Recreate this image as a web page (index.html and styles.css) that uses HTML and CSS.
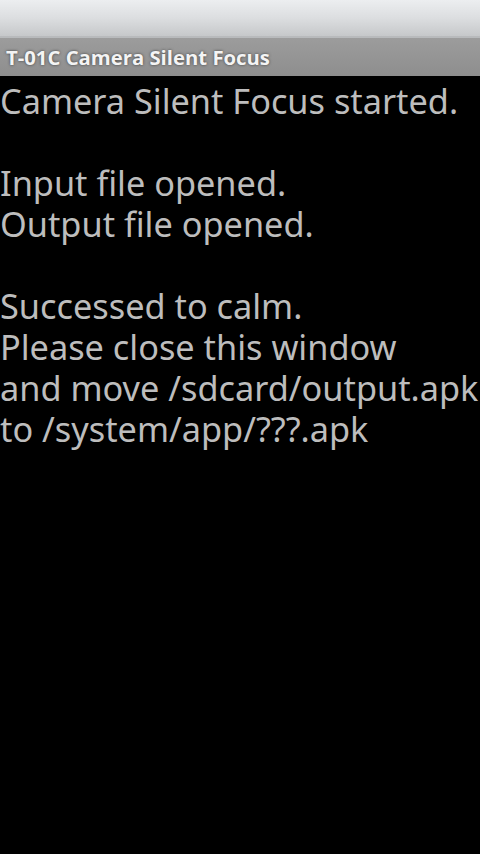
FILE: index.html
```html
<!DOCTYPE html>
<html>
<head>
<meta charset="utf-8">
<link rel="stylesheet" href="styles.css">
</head>
<body>
<div class="status-bar"></div>
<div class="title-bar"><span class="title">T-01C Camera Silent Focus</span></div>
<div class="log">
<div class="line">Camera Silent Focus started.</div>
<div class="line">&nbsp;</div>
<div class="line">Input file opened.</div>
<div class="line">Output file opened.</div>
<div class="line">&nbsp;</div>
<div class="line">Successed to calm.</div>
<div class="line">Please close this window</div>
<div class="line">and move /sdcard/output.apk</div>
<div class="line">to /system/app/???.apk</div>
</div>
</body>
</html>
```
FILE: styles.css
```css
html, body {
  margin: 0;
  padding: 0;
  background: #000;
  width: 480px;
  height: 854px;
  overflow: hidden;
}
.status-bar {
  height: 38px;
  box-sizing: border-box;
  background: linear-gradient(to bottom, #eceef0 0%, #dcdee0 50%, #c6c8ca 100%);
  border-bottom: 2px solid #b8babc;
}
.title-bar {
  height: 38px;
  box-sizing: border-box;
  background: linear-gradient(to bottom, #9c9c9c 0%, #8e8e8e 100%);
  display: flex;
  align-items: center;
  padding-left: 6px;
}
.title {
  font-family: "Open Sans", "Noto Sans", sans-serif;
  font-weight: 700;
  font-size: 20.3px;
  color: #f4f4f4;
  text-shadow: 0 0 3px rgba(0,0,0,0.6);
}
.log {
  font-family: "Noto Sans", "Open Sans", sans-serif;
  font-size: 34.3px;
  line-height: 41px;
  color: #bdbdbd;
  padding-top: 4px;
  white-space: nowrap;
}
.line {
  height: 41px;
}
```
